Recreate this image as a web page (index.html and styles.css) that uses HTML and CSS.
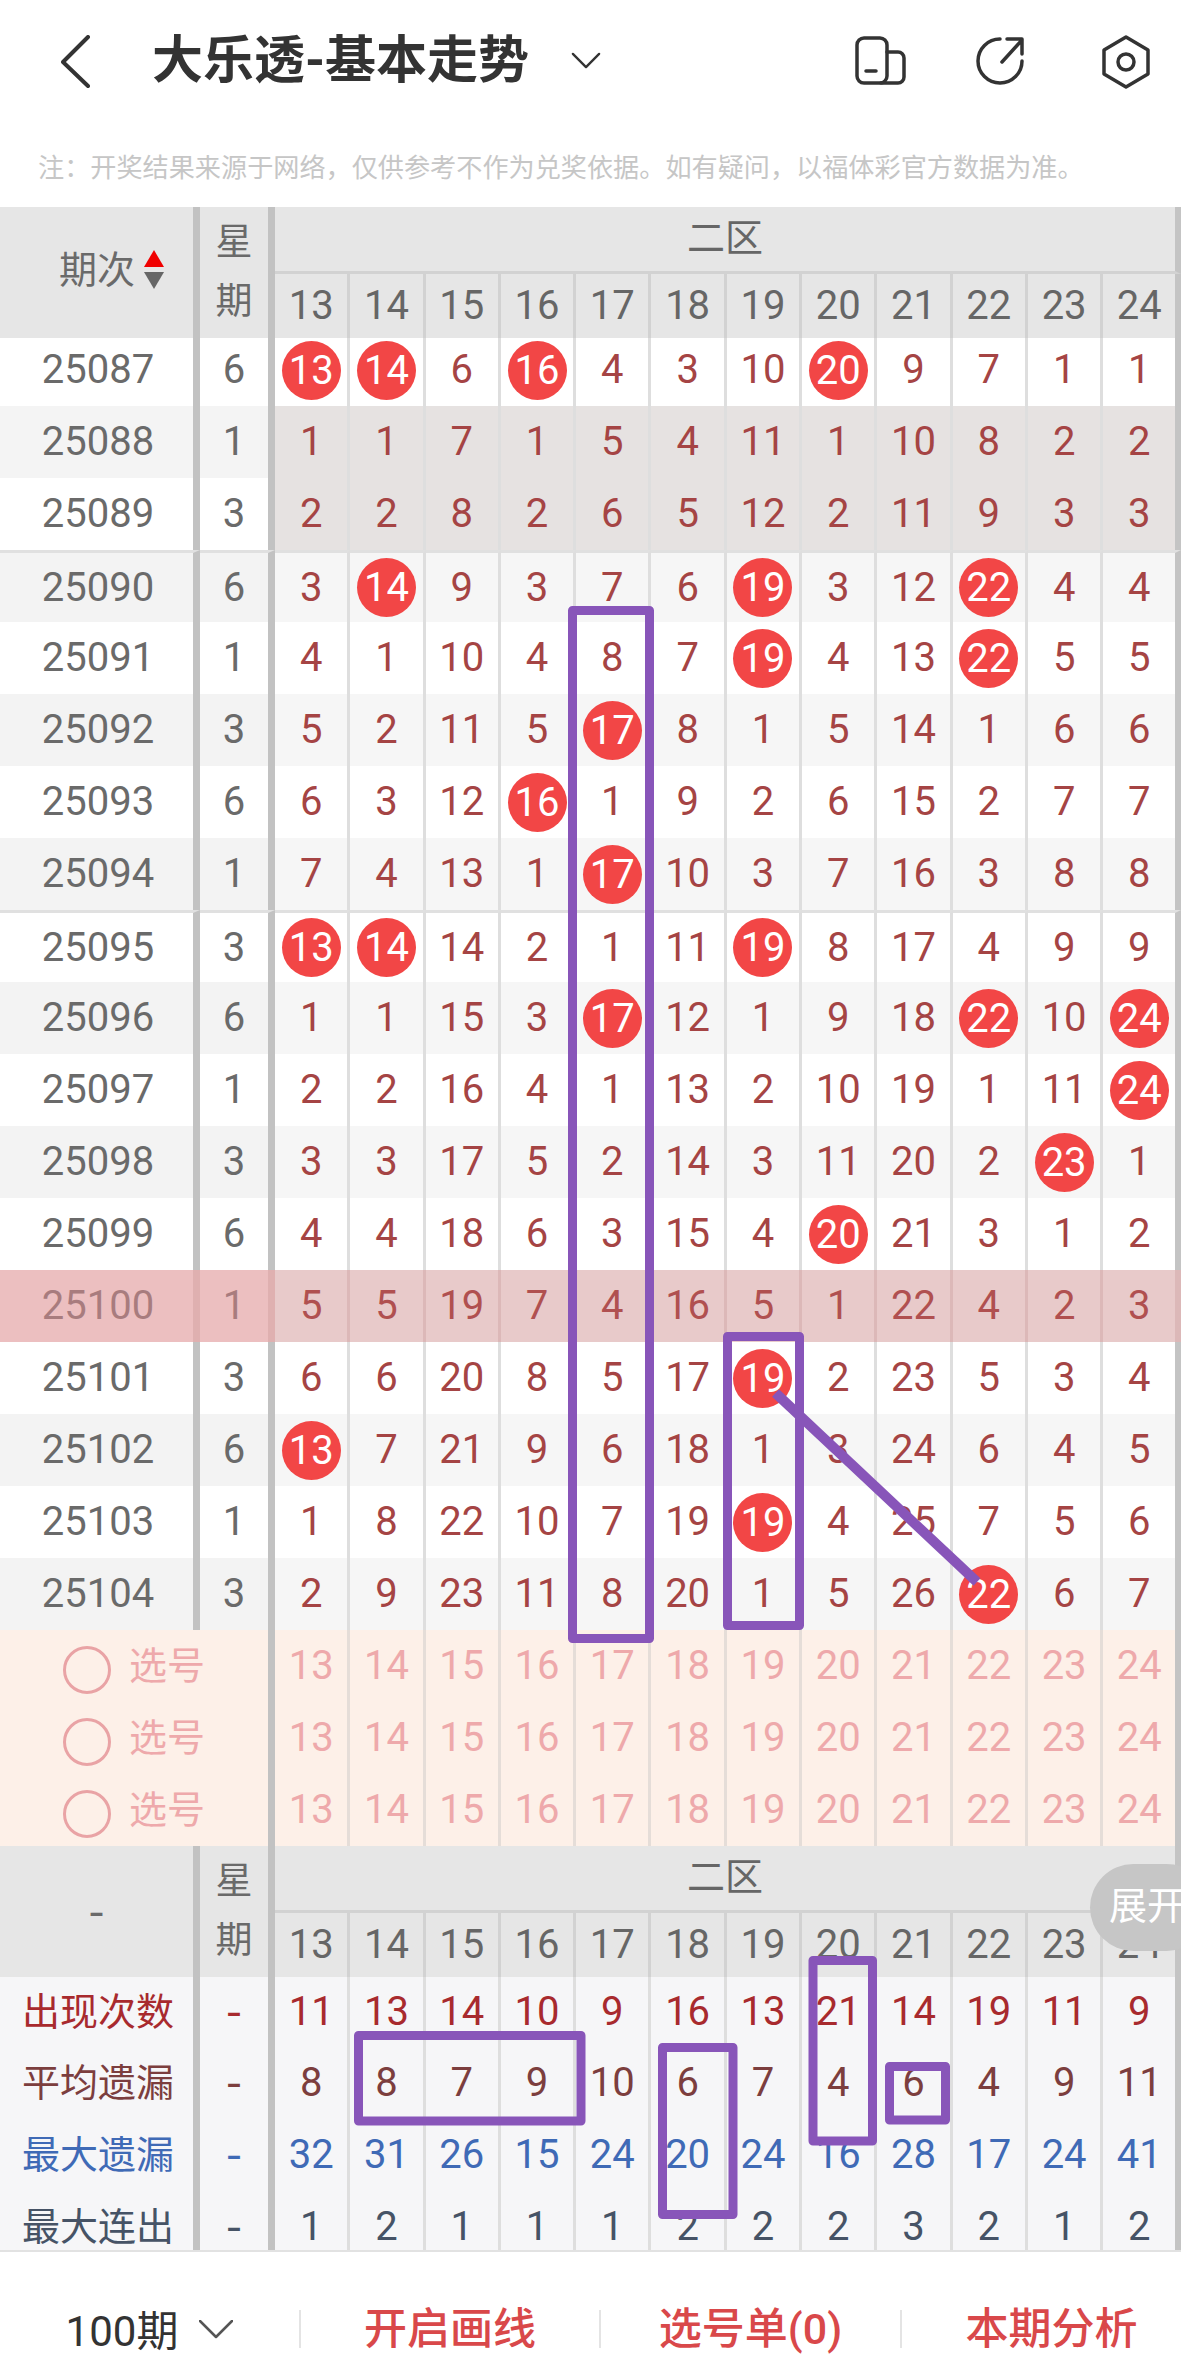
FILE: index.html
```html
<!DOCTYPE html>
<html lang="zh-CN">
<head>
    <meta charset="UTF-8">
    <meta name="viewport" content="width=device-width, initial-scale=1.0">
    <title>大乐透-基本走势</title>
    <link rel="stylesheet" href="styles.css">
</head>

<body>
<div class="page">
    <header class="topbar">
        <svg class="back-icon" width="30" height="54" viewBox="0 0 30 54"><path d="M27 2 2 27l25 24"/></svg>
        <h1>大乐透-基本走势</h1>
        <svg class="caret-icon" width="30" height="17" viewBox="0 0 32 18"><path d="M2 2l14 14L30 2"/></svg>
        <div class="top-actions">
            <svg class="action-icon" width="52" height="52" viewBox="0 0 52 52"><rect x="2" y="2" width="30" height="45" rx="7"/><path d="M32 16h11a6 6 0 0 1 6 6v19a6 6 0 0 1-6 6H26M11 35h10"/></svg>
            <svg class="action-icon" width="52" height="52" viewBox="0 0 52 52"><path d="M24 3a22 22 0 1 0 22 22M26 26 46 4M31 3h15v15"/></svg>
            <svg class="action-icon icon-last" width="52" height="54" viewBox="0 0 52 54"><path d="M26 2l22 13v24L26 52 4 39V15z"/><circle cx="26" cy="27" r="8"/></svg>
        </div>
    </header>
    <p class="notice">注：开奖结果来源于网络，仅供参考不作为兑奖依据。如有疑问，以福体彩官方数据为准。</p>

    <div class="chart">
        <table class="trend">
            <colgroup>
                <col class="col-period"><col class="col-week">
                <col class="col-n"><col class="col-n"><col class="col-n"><col class="col-n"><col class="col-n"><col class="col-n">
                <col class="col-n"><col class="col-n"><col class="col-n"><col class="col-n"><col class="col-n"><col class="col-last">
            </colgroup>
            <thead>
                <tr class="head-zone">
                    <th class="period" rowspan="2"><span class="sort-head">期次<span class="sort-arrows"><i class="arrow-up"></i><i class="arrow-down"></i></span></span></th>
                    <th class="week" rowspan="2"><span class="week-label">星<br>期</span></th>
                    <th class="zone" colspan="12">二区</th>
                </tr>
                <tr class="head-nums">
                    <th>13</th><th>14</th><th>15</th><th>16</th><th>17</th><th>18</th><th>19</th><th>20</th><th>21</th><th>22</th><th>23</th><th>24</th>
                </tr>
            </thead>
            <tbody>
                <tr class="first"><td class="period">25087</td><td class="week">6</td><td><span class="ball">13</span></td><td><span class="ball">14</span></td><td>6</td><td><span class="ball">16</span></td><td>4</td><td>3</td><td>10</td><td><span class="ball">20</span></td><td>9</td><td>7</td><td>1</td><td>1</td></tr>
                <tr class="alt tint"><td class="period">25088</td><td class="week">1</td><td>1</td><td>1</td><td>7</td><td>1</td><td>5</td><td>4</td><td>11</td><td>1</td><td>10</td><td>8</td><td>2</td><td>2</td></tr>
                <tr class="tint"><td class="period">25089</td><td class="week">3</td><td>2</td><td>2</td><td>8</td><td>2</td><td>6</td><td>5</td><td>12</td><td>2</td><td>11</td><td>9</td><td>3</td><td>3</td></tr>
                <tr class="alt group"><td class="period">25090</td><td class="week">6</td><td>3</td><td><span class="ball">14</span></td><td>9</td><td>3</td><td>7</td><td>6</td><td><span class="ball">19</span></td><td>3</td><td>12</td><td><span class="ball">22</span></td><td>4</td><td>4</td></tr>
                <tr><td class="period">25091</td><td class="week">1</td><td>4</td><td>1</td><td>10</td><td>4</td><td>8</td><td>7</td><td><span class="ball">19</span></td><td>4</td><td>13</td><td><span class="ball">22</span></td><td>5</td><td>5</td></tr>
                <tr class="alt"><td class="period">25092</td><td class="week">3</td><td>5</td><td>2</td><td>11</td><td>5</td><td><span class="ball">17</span></td><td>8</td><td>1</td><td>5</td><td>14</td><td>1</td><td>6</td><td>6</td></tr>
                <tr><td class="period">25093</td><td class="week">6</td><td>6</td><td>3</td><td>12</td><td><span class="ball">16</span></td><td>1</td><td>9</td><td>2</td><td>6</td><td>15</td><td>2</td><td>7</td><td>7</td></tr>
                <tr class="alt"><td class="period">25094</td><td class="week">1</td><td>7</td><td>4</td><td>13</td><td>1</td><td><span class="ball">17</span></td><td>10</td><td>3</td><td>7</td><td>16</td><td>3</td><td>8</td><td>8</td></tr>
                <tr class="group"><td class="period">25095</td><td class="week">3</td><td><span class="ball">13</span></td><td><span class="ball">14</span></td><td>14</td><td>2</td><td>1</td><td>11</td><td><span class="ball">19</span></td><td>8</td><td>17</td><td>4</td><td>9</td><td>9</td></tr>
                <tr class="alt"><td class="period">25096</td><td class="week">6</td><td>1</td><td>1</td><td>15</td><td>3</td><td><span class="ball">17</span></td><td>12</td><td>1</td><td>9</td><td>18</td><td><span class="ball">22</span></td><td>10</td><td><span class="ball">24</span></td></tr>
                <tr><td class="period">25097</td><td class="week">1</td><td>2</td><td>2</td><td>16</td><td>4</td><td>1</td><td>13</td><td>2</td><td>10</td><td>19</td><td>1</td><td>11</td><td><span class="ball">24</span></td></tr>
                <tr class="alt"><td class="period">25098</td><td class="week">3</td><td>3</td><td>3</td><td>17</td><td>5</td><td>2</td><td>14</td><td>3</td><td>11</td><td>20</td><td>2</td><td><span class="ball">23</span></td><td>1</td></tr>
                <tr><td class="period">25099</td><td class="week">6</td><td>4</td><td>4</td><td>18</td><td>6</td><td>3</td><td>15</td><td>4</td><td><span class="ball">20</span></td><td>21</td><td>3</td><td>1</td><td>2</td></tr>
                <tr class="current"><td class="period">25100</td><td class="week">1</td><td>5</td><td>5</td><td>19</td><td>7</td><td>4</td><td>16</td><td>5</td><td>1</td><td>22</td><td>4</td><td>2</td><td>3</td></tr>
                <tr><td class="period">25101</td><td class="week">3</td><td>6</td><td>6</td><td>20</td><td>8</td><td>5</td><td>17</td><td><span class="ball">19</span></td><td>2</td><td>23</td><td>5</td><td>3</td><td>4</td></tr>
                <tr class="alt"><td class="period">25102</td><td class="week">6</td><td><span class="ball">13</span></td><td>7</td><td>21</td><td>9</td><td>6</td><td>18</td><td>1</td><td>3</td><td>24</td><td>6</td><td>4</td><td>5</td></tr>
                <tr><td class="period">25103</td><td class="week">1</td><td>1</td><td>8</td><td>22</td><td>10</td><td>7</td><td>19</td><td><span class="ball">19</span></td><td>4</td><td>25</td><td>7</td><td>5</td><td>6</td></tr>
                <tr class="alt"><td class="period">25104</td><td class="week">3</td><td>2</td><td>9</td><td>23</td><td>11</td><td>8</td><td>20</td><td>1</td><td>5</td><td>26</td><td><span class="ball">22</span></td><td>6</td><td>7</td></tr>
            </tbody>
            <tbody class="picker">
                <tr><td class="pick" colspan="2"><span class="pick-label"><i class="radio"></i>选号</span></td><td>13</td><td>14</td><td>15</td><td>16</td><td>17</td><td>18</td><td>19</td><td>20</td><td>21</td><td>22</td><td>23</td><td>24</td></tr>
                <tr><td class="pick" colspan="2"><span class="pick-label"><i class="radio"></i>选号</span></td><td>13</td><td>14</td><td>15</td><td>16</td><td>17</td><td>18</td><td>19</td><td>20</td><td>21</td><td>22</td><td>23</td><td>24</td></tr>
                <tr><td class="pick" colspan="2"><span class="pick-label"><i class="radio"></i>选号</span></td><td>13</td><td>14</td><td>15</td><td>16</td><td>17</td><td>18</td><td>19</td><td>20</td><td>21</td><td>22</td><td>23</td><td>24</td></tr>
            </tbody>
            <thead>
                <tr class="head-zone">
                    <th class="period dash" rowspan="2">-</th>
                    <th class="week" rowspan="2"><span class="week-label">星<br>期</span></th>
                    <th class="zone" colspan="12">二区</th>
                </tr>
                <tr class="head-nums">
                    <th>13</th><th>14</th><th>15</th><th>16</th><th>17</th><th>18</th><th>19</th><th>20</th><th>21</th><th>22</th><th>23</th><th>24</th>
                </tr>
            </thead>
            <tbody class="stats">
                <tr class="stat-count"><td class="period label">出现次数</td><td class="week dash">-</td><td>11</td><td>13</td><td>14</td><td>10</td><td>9</td><td>16</td><td>13</td><td>21</td><td>14</td><td>19</td><td>11</td><td>9</td></tr>
                <tr class="stat-avg"><td class="period label">平均遗漏</td><td class="week dash">-</td><td>8</td><td>8</td><td>7</td><td>9</td><td>10</td><td>6</td><td>7</td><td>4</td><td>6</td><td>4</td><td>9</td><td>11</td></tr>
                <tr class="stat-max"><td class="period label">最大遗漏</td><td class="week dash">-</td><td>32</td><td>31</td><td>26</td><td>15</td><td>24</td><td>20</td><td>24</td><td>16</td><td>28</td><td>17</td><td>24</td><td>41</td></tr>
                <tr class="stat-run"><td class="period label">最大连出</td><td class="week dash">-</td><td>1</td><td>2</td><td>1</td><td>1</td><td>1</td><td>2</td><td>2</td><td>2</td><td>3</td><td>2</td><td>1</td><td>2</td></tr>
            </tbody>
        </table>
    </div>

    <footer class="bottombar">
        <div class="bar-item range">100期<svg class="range-caret" width="34" height="19" viewBox="0 0 34 19"><path d="M1 1l16 16L33 1"/></svg></div>
        <div class="bar-item action">开启画线</div>
        <div class="bar-item action">选号单(0)</div>
        <div class="bar-item action last">本期分析</div>
    </footer>

    <!-- hand drawn marks on top of the chart -->
    <svg class="marks" width="1181" height="2370" viewBox="0 0 1181 2370">
        <rect x="572.5" y="610.5" width="77" height="1028"/>
        <rect x="727.5" y="1336.5" width="72" height="289"/>
        <path d="M775.5 1393 977 1582"/>
        <rect x="358.5" y="2035.5" width="222.5" height="85.5"/>
        <rect x="662.5" y="2047.5" width="70.5" height="167"/>
        <rect x="813" y="1960.5" width="59.5" height="180.5"/>
        <rect x="889.5" y="2066.5" width="56" height="53.5"/>
    </svg>

    <div class="expand">展开</div>
</div>
</body>
</html>
```

FILE: styles.css
```css
* {
    box-sizing: border-box;
}

body {
    margin: 0;
    background-color: #fff;
    font-family: Roboto, "Noto Sans CJK SC", sans-serif;
    color: #666;
}

.page {
    position: relative;
    width: 1181px;
    height: 2370px;
    overflow: hidden;
    background-color: #fff;
}

/* top bar */
.topbar {
    display: flex;
    align-items: center;
    height: 124px;
    padding-left: 61px;
}

.topbar h1 {
    margin: -2px 0 0 61px;
    font-size: 51px;
    line-height: 60px;
    font-weight: 700;
    color: #333;
    white-space: nowrap;
}

.back-icon path,
.caret-icon path,
.action-icon path,
.action-icon rect,
.action-icon circle,
.range-caret path {
    fill: none;
    stroke: #333;
    stroke-linecap: round;
    stroke-linejoin: round;
}

.back-icon path {
    stroke-width: 4;
}

.back-icon {
    margin-top: -1px;
}

.caret-icon {
    margin: -4px 0 0 42px;
}

.caret-icon path {
    stroke-width: 2.5;
}

.action-icon path,
.action-icon rect,
.action-icon circle {
    stroke-width: 3.5;
}

.top-actions {
    display: flex;
    align-items: center;
    gap: 69px;
    margin-left: 254px;
}

.icon-last {
    margin-left: 3px;
}

.notice {
    height: 83px;
    margin: 0;
    padding: 26px 0 0 38px;
    font-size: 26.15px;
    line-height: 36px;
    color: #c6c6c6;
    white-space: nowrap;
}

/* chart */
.chart {
    height: 2043px;
    overflow: hidden;
}

.trend {
    width: 1181px;
    table-layout: fixed;
    border-collapse: separate;
    border-spacing: 0;
    font-size: 40px;
}

.col-period {
    width: 200px;
}

.col-week {
    width: 75px;
}

.col-n {
    width: 75.3px;
}

.col-last {
    width: 77.7px;
}

.trend th,
.trend td {
    padding: 0;
    text-align: center;
    vertical-align: middle;
    font-weight: 400;
    line-height: 44px;
    border-right: 3px solid #dedede;
}

.trend th:last-child,
.trend td:last-child {
    border-right: 6px solid #c4c4c4;
}

.trend .period,
.trend .week,
.trend .pick {
    border-right: 7px solid #c2c2c2;
    color: #6a6a6a;
}

.trend td.period {
    padding-left: 3px;
}

.trend tbody tr {
    height: 72px;
    color: #a54444;
}

.trend tbody tr.first {
    height: 68px;
}

.trend tbody tr.first td {
    padding-bottom: 4px;
}

.trend tbody.stats tr.stat-count {
    height: 70px;
}

.trend tr.alt td {
    background-color: #f6f6f6;
}

.trend tr.alt .period,
.trend tr.alt .week {
    background-color: #f3f3f3;
}

.trend tr.tint td {
    background-color: #e6e2e1;
}

.trend tr.tint .period,
.trend tr.tint .week {
    background-color: #f4f4f4;
}

.trend tr.tint:not(.alt) .period,
.trend tr.tint:not(.alt) .week {
    background-color: #fff;
}

.trend tr.group td {
    border-top: 3px solid #e0e0e0;
}

.trend tr.current td {
    background-color: #e8caca;
    border-right-color: #dcb8b8;
    color: #b05050;
}

.trend tr.current .period,
.trend tr.current .week {
    background-color: #ecbfc0;
    border-right-color: #dfb0b0;
    color: #a87c7e;
}

.ball {
    display: inline-block;
    width: 59px;
    height: 59px;
    border-radius: 50%;
    background-color: #f24646;
    color: #fff;
    line-height: 59px;
    vertical-align: middle;
}

/* header rows */
.head-zone {
    height: 67px;
}

.head-nums {
    height: 64px;
}

.trend th {
    background-color: #e6e6e6;
    color: #666;
    border-right-color: #d2d2d2;
}

.trend .zone {
    padding-bottom: 2px;
    font-size: 38px;
    border-bottom: 3px solid #d2d2d2;
}

.sort-head {
    display: inline-flex;
    align-items: center;
    gap: 9px;
    margin-bottom: 6px;
    padding-left: 30px;
    font-size: 38px;
}

.sort-arrows {
    display: flex;
    flex-direction: column;
    gap: 5px;
}

.arrow-up,
.arrow-down {
    display: block;
    border-left: 10px solid transparent;
    border-right: 10px solid transparent;
}

.arrow-up {
    border-bottom: 17px solid #f00000;
}

.arrow-down {
    border-top: 17px solid #666;
}

.week-label {
    display: block;
    margin-bottom: 2px;
    font-size: 37px;
    line-height: 59px;
}

.trend .dash {
    padding-bottom: 10px;
    font-family: "Noto Sans CJK SC", sans-serif;
    font-size: 46px;
}

/* picker rows */
.picker tr td {
    background-color: #fdf0e8;
    border-right-color: #e5ddd8;
    color: #eea9ab;
}

.trend .picker .pick {
    border-right-color: #c2c2c2;
    color: #eea9ab;
    text-align: left;
    padding-left: 63px;
}

.pick-label {
    display: flex;
    align-items: center;
    gap: 18px;
    font-size: 38px;
}

.radio {
    width: 48px;
    height: 48px;
    margin-top: 8px;
    border: 3px solid #e9a3a5;
    border-radius: 50%;
}

/* stats rows */
.stats tr td {
    background-color: #f6f6f8;
}

.stats .label {
    font-size: 38px;
}

.trend .stats .stat-count td {
    color: #a82a2e;
}

.trend .stats .stat-avg td {
    color: #7c3e3e;
}

.trend .stats .stat-max td {
    color: #3f6ab6;
}

.trend .stats .stat-run td {
    color: #465366;
}

/* bottom bar */
.bottombar {
    display: grid;
    grid-template-columns: 301px 300px 301px 279px;
    height: 120px;
    padding-top: 58px;
    border-top: 2px solid #e2e2e2;
}

.bar-item {
    display: flex;
    align-items: center;
    justify-content: center;
    height: 38px;
    border-right: 2px solid #e4e4e4;
    font-size: 43px;
    white-space: nowrap;
}

.bar-item.last {
    border-right: none;
    padding-left: 20px;
}

.range {
    gap: 21px;
    padding-bottom: 4px;
    font-size: 42px;
    color: #333;
}

.range-caret {
    margin-top: 4px;
}

.range-caret path {
    stroke-width: 2.5;
    stroke: #555;
}

.action {
    padding-bottom: 8px;
    color: #d9484a;
    font-weight: 500;
}

/* overlays */
.marks {
    position: absolute;
    top: 0;
    left: 0;
    pointer-events: none;
}

.marks rect,
.marks path {
    fill: none;
    stroke: #8855b9;
    stroke-width: 9;
    stroke-linejoin: round;
}

.marks path {
    stroke-width: 10;
}

.expand {
    position: absolute;
    top: 1864px;
    left: 1090px;
    width: 120px;
    height: 87px;
    padding-left: 19px;
    border-radius: 44px;
    background-color: #c6c6c6;
    color: #fff;
    font-size: 38px;
    line-height: 84px;
    white-space: nowrap;
}
```
